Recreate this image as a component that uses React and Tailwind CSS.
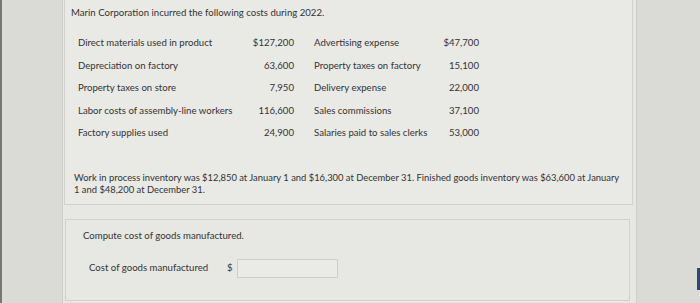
import React from "react";

const rows = [
  ["Direct materials used in product", "$127,200", "Advertising expense", "$47,700"],
  ["Depreciation on factory", "63,600", "Property taxes on factory", "15,100"],
  ["Property taxes on store", "7,950", "Delivery expense", "22,000"],
  ["Labor costs of assembly-line workers", "116,600", "Sales commissions", "37,100"],
  ["Factory supplies used", "24,900", "Salaries paid to sales clerks", "53,000"],
];

export default function App() {
  return (
    <div
      className="w-[700px] h-[303px] overflow-hidden flex bg-[#d7d7d3] text-[#333333]"
      style={{ fontFamily: "Lato, 'Open Sans', sans-serif" }}
    >
      <div className="w-[2px] shrink-0 bg-[#777775]" />
      <div className="w-[60px] shrink-0 bg-[#dadad6]" />
      <div className="w-[575px] shrink-0 bg-[#e7e7e4] border-l border-r border-[#cdcdc9] flex flex-col">
        <div className="mt-[-1px] ml-[1px] w-[569px] h-[206px] border border-[#d1d1cd] bg-[#e9e9e6]">
          <div className="pl-[6px] pt-[7px] text-[9.6px] leading-[12px]">
            Marin Corporation incurred the following costs during 2022.
          </div>
          <div className="mt-[13px] ml-[13px] text-[9.6px]">
            {rows.map((r, i) => (
              <div key={i} className="flex items-center h-[22.5px]">
                <div className="w-[170px]">{r[0]}</div>
                <div className="w-[46px] text-right">{r[1]}</div>
                <div className="w-[20px]" />
                <div className="w-[117px]">{r[2]}</div>
                <div className="w-[48px] text-right">{r[3]}</div>
              </div>
            ))}
          </div>
          <div className="mt-[27px] ml-[9px] whitespace-nowrap text-[9.4px] leading-[12px]">
            Work in process inventory was $12,850 at January 1 and $16,300 at December 31. Finished goods inventory was $63,600 at January
            <br />
            1 and $48,200 at December 31.
          </div>
        </div>
        <div className="mt-[14px] ml-[2px] w-[565px] h-[82px] border border-[#d1d1cd] bg-[#e7e7e4]">
          <div className="pl-[17px] pt-[10px] text-[9.6px] leading-[12px]">
            Compute cost of goods manufactured.
          </div>
          <div className="mt-[17px] pl-[23px] flex items-center text-[9.6px]">
            <div className="w-[138px]">Cost of goods manufactured</div>
            <div className="w-[10px]">$</div>
            <div className="w-[101px] h-[19px] border border-[#cdcdc9] bg-[#eaeae7]" />
          </div>
        </div>
      </div>
      <div className="flex-1 bg-[#dadad6] flex flex-col justify-end items-end pb-[13px]">
        <div className="w-[3px] h-[22px] bg-[#2b4a7a]" />
      </div>
    </div>
  );
}
